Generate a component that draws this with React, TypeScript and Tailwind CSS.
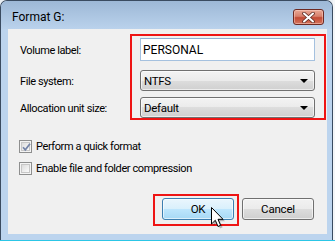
import React from 'react'

const labels = [
  { text: 'Volume label:', h: 'h-[23px]', mt: 'mt-0' },
  { text: 'File system:', h: 'h-[21px]', mt: 'mt-[9px]' },
  { text: 'Allocation unit size:', h: 'h-[21px]', mt: 'mt-[6px]' },
]

function Select({ value, className }: { value: string; className: string }) {
  return (
    <div
      className={`${className} h-[21px] flex items-center rounded-[3px] border border-[#707070] pl-[3px] pr-[6px]
                  bg-[linear-gradient(#f3f3f3,#ebebeb_50%,#dddddd_50%,#d0d0d0)] shadow-[inset_0_0_0_1px_rgba(255,255,255,0.6)]`}
    >
      <span className="text-[11.5px] tracking-[-0.3px]">{value}</span>
      <svg className="ml-auto" width="8" height="4" viewBox="0 0 8 4">
        <path d="M0 0 H8 L4 4 Z" fill="#000" />
      </svg>
    </div>
  )
}

function Checkbox({ checked, label, className }: { checked?: boolean; label: string; className: string }) {
  return (
    <div className={`${className} flex items-center pl-[11px] h-[13px]`}>
      <div className="w-[13px] h-[13px] border border-[#8e8f8f] bg-[#f4f4f4] p-[1px] shrink-0">
        <div className="w-full h-full border border-[#c7c7c7] bg-[linear-gradient(135deg,#dcdcdc,#fbfbfb)] relative">
          {checked && (
            <svg className="absolute -left-[1px] -top-[1px]" width="11" height="11" viewBox="0 0 11 11">
              <path d="M2 5.2 L4.3 7.8 L9 1.8" fill="none" stroke="#7484a8" strokeWidth="1.7" />
            </svg>
          )}
        </div>
      </div>
      <span className="ml-[4px] leading-none text-[11px] tracking-[-0.4px]">{label}</span>
    </div>
  )
}

export default function App() {
  return (
    <div className="w-[335px] h-[241px] bg-[#e9eef3] flex flex-col overflow-hidden relative text-[12px] leading-[16px] text-black font-[Roboto,'Liberation_Sans',sans-serif]">
      <div className="flex">
        {/* Window */}
        <div className="w-[333px] h-[240px] rounded-t-[7px] border border-b-0 border-[#3a4b60] bg-[#bcd4ee] flex flex-col">
          {/* Title bar */}
          <div className="h-[28px] shrink-0 flex items-start pt-[8px] pl-[11px] pr-[8px] rounded-t-[6px] bg-gradient-to-b from-[#9db8d6] to-[#bad2ec]">
            <span>Format G:</span>
            <div className="ml-auto w-[31px] h-[16px] rounded-[3px] border border-[#6e2a22] flex items-center justify-center
                            bg-[linear-gradient(#eaa894,#d7806c_45%,#c24a34_55%,#d5745c)] shadow-[inset_0_0_0_1px_rgba(255,220,210,0.45)]">
              <svg width="13" height="11" viewBox="0 0 13 11">
                <path d="M2 1.5 L11 9.5 M11 1.5 L2 9.5" stroke="#5a2a22" strokeWidth="3.6" strokeLinecap="round" />
                <path d="M2 1.5 L11 9.5 M11 1.5 L2 9.5" stroke="#fff" strokeWidth="2" strokeLinecap="round" />
              </svg>
            </div>
          </div>

          {/* Body */}
          <div className="flex-1 pl-[7px] pr-[5px] pb-[6px] flex">
            <div className="flex-1 bg-[#f0f0f0] flex flex-col">
              <div className="flex mt-[5px]">
                <div className="w-[110px] ml-[12px] flex flex-col pt-[5px] text-[11px] tracking-[-0.4px]">
                  {labels.map((l) => (
                    <div key={l.text} className={`${l.h} ${l.mt} flex items-center`}>
                      {l.text}
                    </div>
                  ))}
                </div>
                <div className="w-[196px] border-2 border-[#ee1414] pt-[2px] pl-[8px] pr-[9px] flex flex-col">
                  <div className="h-[23px] bg-white border border-[#a5c1df] border-t-[#8fb0d4] pl-[2px] flex items-center">
                    PERSONAL
                  </div>
                  <Select value="NTFS" className="mt-[9px]" />
                  <Select value="Default" className="mt-[6px]" />
                </div>
              </div>

              <Checkbox checked label="Perform a quick format" className="mt-[20px]" />
              <Checkbox label="Enable file and folder compression" className="mt-[9px]" />

              <div className="flex justify-end items-start pr-[13px] mt-[19px] text-[11.5px] tracking-[-0.2px]">
                <div className="w-[86px] h-[32px] border-2 border-[#ee1414] pt-[2px] pl-[7px]">
                  <div className="w-[72px] h-[22px] rounded-[3px] border border-[#3c7fb1] flex items-center justify-center
                                  bg-[linear-gradient(#eaf6fd,#d9f0fc_50%,#bee6fd_50%,#a7d9f5)] shadow-[inset_0_0_0_1px_rgba(255,255,255,0.6)]">
                    OK
                  </div>
                </div>
                <div className="ml-[3px] mt-[4px] w-[72px] h-[22px] rounded-[3px] border border-[#707070] flex items-center justify-center
                                bg-[linear-gradient(#f2f2f2,#ebebeb_50%,#dddddd_50%,#cfcfcf)] shadow-[inset_0_0_0_1px_rgba(255,255,255,0.6)]">
                  Cancel
                </div>
              </div>
            </div>
          </div>
        </div>
        <div className="w-[2px] bg-[#f4f6f8]" />
      </div>
      <div className="h-[1px] bg-[#2cc6e6]" />

      {/* Mouse pointer over OK */}
      <svg className="absolute left-[211px] top-[207px]" width="16" height="24" viewBox="0 0 16 24">
        <path d="M2.5 2.5 V19 L6.3 15.3 L9 21.5 L11.6 20.3 L9 14.3 H14 Z" fill="rgba(0,0,0,0.25)" />
        <path d="M0.5 0.5 V17 L4.3 13.3 L7 19.5 L9.6 18.3 L7 12.3 H12 Z" fill="#fff" stroke="#000" strokeWidth="1" strokeLinejoin="round" />
      </svg>
    </div>
  )
}
